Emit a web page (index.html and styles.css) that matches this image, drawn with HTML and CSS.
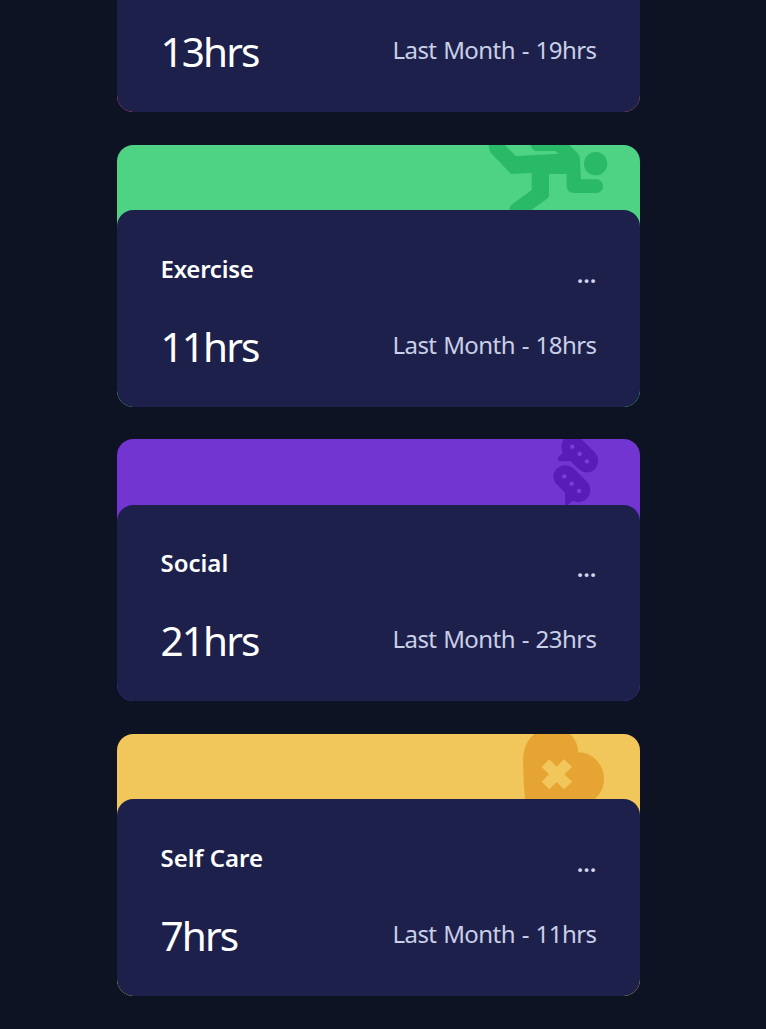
FILE: index.html
```html
<!DOCTYPE html>
<html lang="en">
<head>
<meta charset="utf-8">
<title>Time tracking</title>
<link rel="stylesheet" href="styles.css">
</head>
<body>
<main class="cards">
  <article class="card card-partial">
    <div class="body">
      <div class="stats"><p class="hours">13hrs</p><p class="previous">Last Month - 19hrs</p></div>
    </div>
  </article>
  <article class="card exercise">
    <div class="banner">
      <svg width="160" height="66" viewBox="0 15 480 198" fill="#2aba67">
        <path d="M26 15Q27 32 35 41L93 102L155 99V150L97 192Q88 199 88 213H150L203 175Q207 172 207 166V102H260V136Q260 159 282 159H349A20.500 20.500 0 0 0 349 118H303L300 57Q300 47 293 40L268 15H152Q156 33 172 33H226L236 41L107 48L75 15Z"/>
        <circle cx="347" cy="71" r="35"/>
      </svg>
    </div>
    <div class="body">
      <div class="heading"><h2 class="title">Exercise</h2><span class="more">...</span></div>
      <div class="stats"><p class="hours">11hrs</p><p class="previous">Last Month - 18hrs</p></div>
    </div>
  </article>
  <article class="card social">
    <div class="banner">
      <svg width="110" height="66" viewBox="0 21 330 198" fill="#5a1cb9">
        <path d="M101 21Q90 41 98 62L84 78Q82 87 91 88L121 87L145 110C160 125 184 124 196 110C208 95 207 75 194 61L154 21Z"/>
        <path d="M80 110C94 96 117 96 132 110L169 147C184 162 184 183 172 198C161 211 144 214 128 206L112 220H105V182L80 157C67 144 67 124 80 110Z"/>
        <g fill="#7a3fd8"><circle cx="127" cy="44" r="6.500"/><circle cx="149" cy="66" r="6.500"/><circle cx="171" cy="88" r="6.500"/><circle cx="103" cy="133" r="6.500"/><circle cx="125" cy="155" r="6.500"/><circle cx="147" cy="177" r="6.500"/></g>
      </svg>
    </div>
    <div class="body">
      <div class="heading"><h2 class="title">Social</h2><span class="more">...</span></div>
      <div class="stats"><p class="hours">21hrs</p><p class="previous">Last Month - 23hrs</p></div>
    </div>
  </article>
  <article class="card self-care">
    <div class="banner">
      <svg width="130" height="66" viewBox="0 18 390 198" fill="#e6a532">
        <path d="M73 18C50 38 40 63 39 98Q40 160 45 216H251C272 199 282 177 282 152C282 110 248 73 205 73C204 51 195 31 180 18Z"/>
        <path fill="#f1c65b" d="M118 94L140 116L162 94L186 117L163 139L186 161L162 184L140 162L118 184L95 161L117 139L95 117Z"/>
      </svg>
    </div>
    <div class="body">
      <div class="heading"><h2 class="title">Self Care</h2><span class="more">...</span></div>
      <div class="stats"><p class="hours">7hrs</p><p class="previous">Last Month - 11hrs</p></div>
    </div>
  </article>
</main>
</body>
</html>
```
FILE: styles.css
```css
* { box-sizing: border-box; }
html, body { margin: 0; }
body {
  height: 1029px;
  overflow: hidden;
  background: #0d1323;
  color: #fff;
  font-family: "Segoe UI", "Noto Sans", "Open Sans", sans-serif;
}
.cards {
  width: 523px;
  margin-left: 117px;
}
.card {
  height: 262px;
  margin-bottom: 33px;
  border-radius: 16.4px;
  overflow: hidden;
}
.card.exercise { margin-bottom: 32px; }
.card-partial {
  height: 112px;
  border-radius: 0 0 16.4px 16.4px;
  background: #ff5e7d;
}
.exercise { background: #4ed385; }
.social { background: #7335d2; }
.self-care { background: #f1c65b; }
.banner {
  display: flex;
  justify-content: flex-end;
  height: 65px;
  overflow: hidden;
}
.social .banner { height: 66px; }
.banner svg { display: block; flex: none; }
.body {
  height: 197px;
  padding: 39px 43.500px 0 43.500px;
  border-radius: 16.4px;
  background: #1e204c;
}
.social .body { height: 196px; padding-top: 38px; }
.card-partial .body {
  height: 112px;
  padding-top: 22px;
  border-radius: 0 0 16.4px 16.4px;
}
.heading, .stats {
  display: flex;
  justify-content: space-between;
}
.heading { height: 68px; }
.title, .hours, .previous { margin: 0; white-space: nowrap; }
.title {
  font-size: 24px;
  line-height: 40px;
  font-weight: 600;
}
.exercise .title { letter-spacing: -0.25px; }
.more {
  color: #d0d7ee;
  font-size: 24px;
  font-weight: 600;
  line-height: 50px;
}
.stats { height: 60px; }
.hours {
  font-size: 40.500px;
  line-height: 60px;
  letter-spacing: -1.9px;
}
.previous {
  color: #c8cfe6;
  font-size: 24px;
  line-height: 55px;
  letter-spacing: -0.55px;
  word-spacing: 1px;
}
```
